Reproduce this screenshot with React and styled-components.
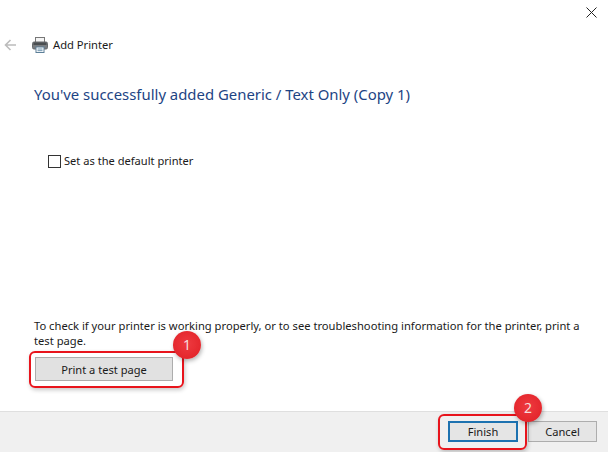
import React from "react";
import styled, { createGlobalStyle } from "styled-components";

const Global = createGlobalStyle`
  html, body { margin: 0; padding: 0; background: #fff; }
  body { font-family: "Noto Sans", "Open Sans", sans-serif; }
`;

const Dialog = styled.div`
  width: 608px;
  height: 452px;
  display: flex;
  flex-direction: column;
  overflow: hidden;
  background: #fff;
  color: #1a1a1a;
  font-size: 11.1px;
`;
const CloseRow = styled.div`
  height: 28px;
  display: flex;
  justify-content: flex-end;
  padding: 7px 11px 0 0;
  box-sizing: border-box;
`;
const NavBar = styled.div`
  height: 20px;
  margin-top: 7px;
  display: flex;
  align-items: center;
  padding-left: 4px;
`;
const BackSlot = styled.div`
  width: 28px;
  display: flex;
`;
const WindowName = styled.span`
  margin-left: 5px;
  font-size: 11.2px;
  line-height: 20px;
  color: #1a1a1a;
`;
const Content = styled.main`
  flex: 1;
  display: flex;
  flex-direction: column;
  padding: 0 0 0 34px;
`;
const Title = styled.h1`
  margin: 28px 0 0;
  font-size: 14.9px;
  font-weight: 400;
  line-height: 22px;
  color: #1d4484;
`;
const CheckLabel = styled.label`
  display: flex;
  align-items: center;
  gap: 3px;
  margin: 48px 0 0 14px;
  line-height: 16px;
`;
const Box = styled.span`
  width: 11px;
  height: 11px;
  border: 1px solid #333;
  background: #fff;
`;
const Spacer = styled.div`
  flex: 1;
`;
const Note = styled.p`
  margin: 0;
  width: 552px;
  font-size: 11.2px;
  line-height: 15px;
`;
const TestRow = styled.div`
  display: flex;
  margin: 9px 0 30px 1px;
`;
const Anchor = styled.div`
  position: relative;
  display: flex;
  align-self: flex-start;
`;
const Button = styled.button`
  width: ${(p) => p.$w}px;
  height: ${(p) => p.$h}px;
  padding: 0;
  font: 11.1px "Noto Sans", "Open Sans", sans-serif;
  color: #1a1a1a;
  border: ${(p) => (p.$focus ? "2px solid #1d72b0" : "1px solid #adadad")};
  background: ${(p) => p.$bg};
  box-sizing: border-box;
`;
const Callout = styled.div`
  position: absolute;
  left: ${(p) => p.$l}px;
  right: ${(p) => p.$r}px;
  top: ${(p) => p.$t}px;
  bottom: ${(p) => p.$b}px;
  border: 2px solid #e8141c;
  border-radius: 6px;
  box-shadow: 1px 2px 4px rgba(0, 0, 0, 0.22);
  pointer-events: none;
`;
const Badge = styled.div`
  position: absolute;
  left: ${(p) => p.$l}px;
  top: ${(p) => p.$t}px;
  width: 28px;
  height: 28px;
  border-radius: 50%;
  background: radial-gradient(circle at 50% 45%, #ee3a40 0%, #e5282e 65%, #d81f26 100%);
  box-shadow: 1px 2px 4px rgba(0, 0, 0, 0.3);
  color: #f6dcdc;
  font-size: 14px;
  line-height: 28px;
  text-align: center;
`;
const Footer = styled.footer`
  height: 41px;
  background: #f0f0f0;
  border-top: 1px solid #dfdfdf;
  display: flex;
  justify-content: flex-end;
  align-items: flex-start;
  padding: 9px 11px 0 0;
  box-sizing: border-box;
  flex: none;
  gap: 10px;
`;

const PrinterIcon = () => (
  <svg width="16" height="16" viewBox="0 0 16 16">
    <rect x="3.5" y="0.5" width="9" height="5" fill="#f4f4f4" stroke="#777" />
    <rect x="0.5" y="5" width="15" height="7" rx="1.5" fill="#7a7d80" stroke="#66696c" />
    <rect x="1.5" y="5.5" width="13" height="2.5" fill="#4a4e51" />
    <rect x="4" y="10" width="8" height="5.5" fill="#fff" stroke="#5c7f98" />
    <path d="M5.5 12h5M5.5 13.7h5" stroke="#6d93ae" />
  </svg>
);

export default function App() {
  return (
    <Dialog>
      <Global />
      <CloseRow>
        <svg width="11" height="11" viewBox="0 0 11 11">
          <path d="M.5.5l10 10M10.5.5l-10 10" stroke="#222" fill="none" />
        </svg>
      </CloseRow>
      <NavBar>
        <BackSlot>
          <svg width="12" height="12" viewBox="0 0 12 12">
            <path d="M12 6H1.5M6.5 1L1.5 6l5 5" stroke="#bcbcbc" strokeWidth="1.6" fill="none" />
          </svg>
        </BackSlot>
        <PrinterIcon />
        <WindowName>Add Printer</WindowName>
      </NavBar>
      <Content>
        <Title>You've successfully added Generic / Text Only (Copy 1)</Title>
        <CheckLabel>
          <Box />
          Set as the default printer
        </CheckLabel>
        <Spacer />
        <Note>
          To check if your printer is working properly, or to see troubleshooting information for the printer, print a test page.
        </Note>
        <TestRow>
          <Anchor>
            <Button $w={138} $h={24} $bg="#e1e1e1">Print a test page</Button>
            <Callout $l={-6} $r={-11} $t={-6} $b={-7} />
            <Badge $l={138} $t={-26}>1</Badge>
          </Anchor>
        </TestRow>
      </Content>
      <Footer>
        <Anchor>
          <Button $w={70} $h={21} $bg="#e5e5e5" $focus>Finish</Button>
          <Callout $l={-10} $r={-9} $t={-7} $b={-8} />
          <Badge $l={66} $t={-27}>2</Badge>
        </Anchor>
        <Button $w={69} $h={21} $bg="#e5e5e5">Cancel</Button>
      </Footer>
    </Dialog>
  );
}
